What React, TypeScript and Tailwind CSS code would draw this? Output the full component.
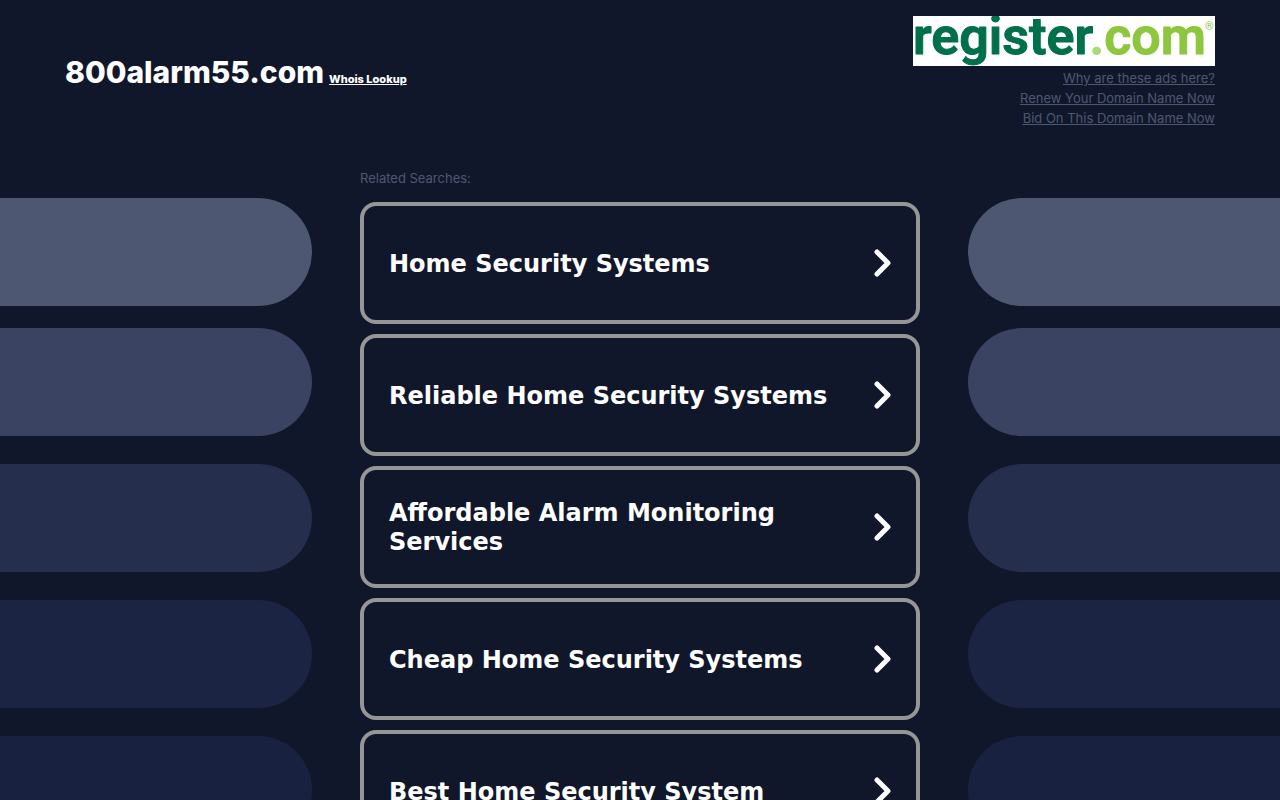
const searches = [
  'Home Security Systems',
  'Reliable Home Security Systems',
  'Affordable Alarm Monitoring Services',
  'Cheap Home Security Systems',
  'Best Home Security System',
];

const domainLinks = ['Why are these ads here?', 'Renew Your Domain Name Now', 'Bid On This Domain Name Now'];

function RegisterLogo() {
  return (
    <svg viewBox="0 0 302 50" role="img" aria-label="register.com" className="block h-[50px] w-[302px] bg-white">
      <text
        x="0"
        y="38"
        strokeWidth="1"
        strokeLinejoin="round"
        className="font-['Roboto',sans-serif] text-[52px] font-semibold"
      >
        <tspan fill="#00704a" stroke="#00704a">register</tspan>
        <tspan fill="#add879" stroke="#add879">.</tspan>
        <tspan fill="#8dc63f" stroke="#8dc63f">com</tspan>
      </text>
      <text x="292" y="14" fill="#8dc63f" className="font-['Roboto',sans-serif] text-[11px]">®</text>
    </svg>
  );
}

function Bars({ side }: { side: 'left' | 'right' }) {
  const shape = side === 'left' ? 'rounded-r-full' : 'rounded-l-full';
  return (
    <div aria-hidden="true" className="flex min-w-0 flex-1 flex-col gap-7 pt-[33px]">
      <div className="flex flex-col gap-[22px]">
        <div className={`h-[108px] bg-[#4e5772] ${shape}`} />
        <div className={`h-[108px] bg-[#3b4362] ${shape}`} />
      </div>
      <div className={`h-[108px] bg-[#252e4d] ${shape}`} />
      <div className={`h-[108px] bg-[#1b2443] ${shape}`} />
      <div className={`h-[108px] bg-[#192140] ${shape}`} />
    </div>
  );
}

export default function App() {
  return (
    <div className="min-h-screen bg-[#11172b] font-['Inter',sans-serif] text-white">
      <header className="flex items-start justify-between px-[65px] pt-4 pb-9">
        <div className="flex items-baseline gap-[5px] pt-9 font-extrabold">
          <h1 className="text-[30px] leading-10">800alarm55.com</h1>
          <a href="#whois" className="text-[11px] underline">Whois Lookup</a>
        </div>
        <div className="flex flex-col items-end gap-[2px] pb-px">
          <RegisterLogo />
          <nav className="flex flex-col items-end text-[13px] leading-5 text-[#4e5772] underline">
            {domainLinks.map((label) => (
              <a key={label} href="#domain">{label}</a>
            ))}
          </nav>
        </div>
      </header>
      <div className="flex gap-12">
        <Bars side="left" />
        <main className="w-[560px]">
          <h2 className="pt-[3px] pb-[14px] text-[13px] leading-5 text-[#4e5772]">Related Searches:</h2>
          <ul className="flex flex-col gap-[10px]">
            {searches.map((label) => (
              <li key={label}>
                <a
                  href="#search"
                  className="flex min-h-[122px] items-center justify-between rounded-2xl border-4 border-[#969696] pr-[23px] pl-[25px] font-['DejaVu_Sans',sans-serif] text-[24px] leading-[29px] font-bold"
                >
                  <span className="max-w-[450px] pt-[2px]">{label}</span>
                  <svg viewBox="0 0 20 28" aria-hidden="true" className="h-7 w-5 shrink-0">
                    <path d="M4 3l11 11L4 25" fill="none" stroke="white" strokeWidth="5" strokeLinecap="round" strokeLinejoin="round" />
                  </svg>
                </a>
              </li>
            ))}
          </ul>
        </main>
        <Bars side="right" />
      </div>
    </div>
  );
}
